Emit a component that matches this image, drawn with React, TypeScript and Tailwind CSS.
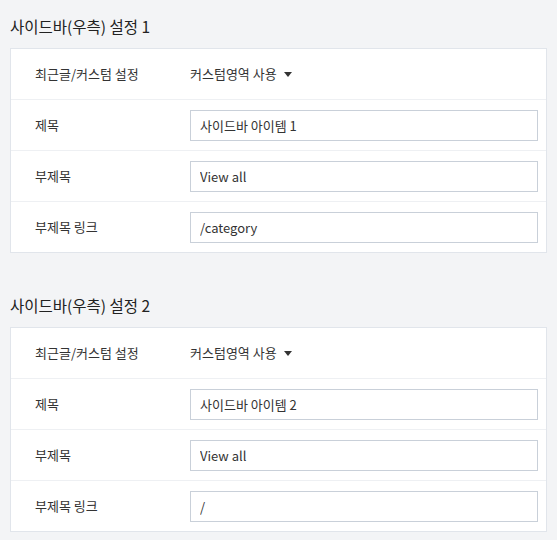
import { useState } from "react";

type Section = {
  title: string;
  item: string;
  subtitle: string;
  link: string;
};

const sections: Section[] = [
  { title: "사이드바(우측) 설정 1", item: "사이드바 아이템 1", subtitle: "View all", link: "/category" },
  { title: "사이드바(우측) 설정 2", item: "사이드바 아이템 2", subtitle: "View all", link: "/" },
];

function Row({ label, children, last }: { label: string; children: React.ReactNode; last?: boolean }) {
  return (
    <div className={`flex items-center ${last ? "h-[50px]" : "h-[51px] border-b border-[#eef0f3]"}`}>
      <div className="w-[179px] pl-[24px] text-[13px] text-[#333]">{label}</div>
      <div className="flex-1 pr-[8px]">{children}</div>
    </div>
  );
}

function TextInput({ value }: { value: string }) {
  const [v, setV] = useState(value);
  return (
    <input
      value={v}
      onChange={(e) => setV(e.target.value)}
      className="w-full h-[31px] border border-[#c9d0d9] bg-white px-[9px] text-[13px] text-[#333] outline-none"
    />
  );
}

function SettingSection({ s }: { s: Section }) {
  return (
    <section>
      <h2 className="pt-[14px] pb-[10px] leading-[24px] text-[15.5px] text-[#222]">{s.title}</h2>
      <div className="bg-white border border-[#e1e5eb]">
        <Row label="최근글/커스텀 설정">
          <button className="flex items-center gap-[7px] text-[13px] text-[#333]">
            커스텀영역 사용
            <svg width="8" height="5" viewBox="0 0 8 5">
              <path d="M0 0h8L4 5z" fill="#333" />
            </svg>
          </button>
        </Row>
        <Row label="제목">
          <TextInput value={s.item} />
        </Row>
        <Row label="부제목">
          <TextInput value={s.subtitle} />
        </Row>
        <Row label="부제목 링크" last>
          <TextInput value={s.link} />
        </Row>
      </div>
    </section>
  );
}

export default function App() {
  return (
    <div
      className="min-h-screen bg-[#f3f4f6] px-[10px] w-[557px]"
      style={{ fontFamily: '"Noto Sans CJK KR", "Noto Sans", sans-serif' }}
    >
      <div className="flex flex-col gap-[26px]">
        {sections.map((s) => (
          <SettingSection key={s.title} s={s} />
        ))}
      </div>
    </div>
  );
}
